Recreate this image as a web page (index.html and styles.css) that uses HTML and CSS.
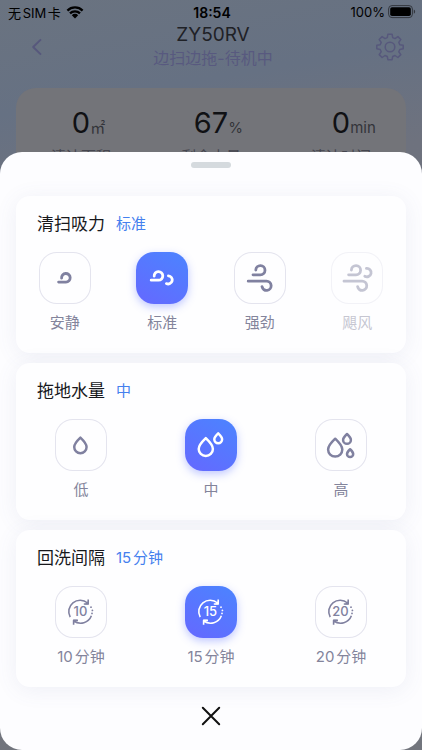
FILE: index.html
```
<!DOCTYPE html>
<html lang="zh-CN">
  <head>
    <meta charset="utf-8" />
    <meta name="viewport" content="width=device-width, initial-scale=1" />
    <title>ZY50RV</title>
    <link rel="stylesheet" href="styles.css">
  </head>
  <body>
    <svg class="defs" aria-hidden="true">
      <symbol id="cycle" viewBox="0 0 52 52">
        <path d="M15.2 31.2A11.4 11.4 0 0 1 32.6 17M36.4 29.8A11.6 11.6 0 0 1 18.8 35" />
        <path d="M33.2 13.6V18H28.8M18.6 38.8V34.4H23" />
        <path class="solid" d="M33.6 14.4V18.4H29.6zM18.4 37.6V33.8H22.2z" />
        <g class="solid">
          <circle cx="36" cy="21.2" r="0.9" />
          <circle cx="37.4" cy="24.4" r="0.9" />
          <circle cx="37" cy="27.4" r="0.9" />
        </g>
      </symbol>
      <symbol id="drop" viewBox="0 0 16 20" overflow="visible">
        <path d="M8 1.4C4.6 4.6 0.9 8.6 0.9 12.2a7.1 7.1 0 0 0 14.2 0C15.1 8.6 11.4 4.6 8 1.4z" vector-effect="non-scaling-stroke" />
      </symbol>
    </svg>

    <div id="device">
      <div id="status">
        <span class="carrier">无SIM卡
          <svg width="18" height="13" viewBox="0 0 18 13">
            <path d="M1.4 4.6a10.8 10.8 0 0 1 15.2 0M4 7.4a7 7 0 0 1 10 0" fill="none" stroke="#000" stroke-width="2.3" />
            <path d="M5.8 9.2a4.5 4.5 0 0 1 6.4 0L9 12.6z" />
          </svg>
        </span>
        <time>18:54</time>
        <span class="battery">100%
          <svg width="28" height="14" viewBox="0 0 28 14">
            <rect x="0.6" y="0.6" width="23.8" height="12" rx="3.4" fill="none" stroke="#33373e" />
            <rect x="2.2" y="2.2" width="20.6" height="8.8" rx="1.8" />
            <path d="M25.8 4.6c1.8.6 1.8 3.6 0 4.2z" fill="#33373e" />
          </svg>
        </span>
      </div>

      <header>
        <button type="button" aria-label="返回">
          <svg class="back" width="28" height="28" viewBox="0 0 28 28"><path d="M19 6.4L11.2 14l7.8 7.6" /></svg>
        </button>
        <div class="name">
          <h1>ZY50RV</h1>
          <p>边扫边拖-待机中</p>
        </div>
        <button type="button" aria-label="设置">
          <svg width="28" height="28" viewBox="0 0 28 28">
            <circle cx="14" cy="14" r="4.8" />
            <path d="M11.9 1.2h4.2l.6 3.4 2.3 1 2.9-2 2.9 2.9-2 2.9 1 2.3 3.4.6v3.4l-3.4.8-1 2.2 2 2.9-2.9 2.9-2.9-2-2.3 1-.6 3.2h-4.2l-.6-3.2-2.3-1-2.9 2-2.9-2.9 2-2.9-1-2.2-3.4-.8v-3.4l3.4-.6 1-2.3-2-2.9 2.9-2.9 2.9 2 2.3-1z" />
          </svg>
        </button>
      </header>

      <ul id="stats">
        <li><b>0</b><i>㎡</i><span>清洁面积</span></li>
        <li><b>67</b><i>%</i><span>剩余电量</span></li>
        <li><b>0</b><i>min</i><span>清洁时间</span></li>
      </ul>
    </div>

    <main id="sheet">
      <div class="handle"></div>

      <section>
        <h2>清扫吸力 <em>标准</em></h2>
        <div class="options">
          <button type="button" aria-pressed="false">
            <svg class="tile wind" viewBox="0 0 52 52"><path d="M22.6 26.2a4.3 4.3 0 1 1 4.3 3.9H19.6" /></svg>
            安静
          </button>
          <button type="button" aria-pressed="true">
            <svg class="tile wind" viewBox="0 0 52 52"><path d="M18.2 24.2a4.3 4.3 0 1 1 4.3 4H15.2M32.4 23.8a4.1 4.1 0 1 1-2 7.8" /></svg>
            标准
          </button>
          <button type="button" aria-pressed="false">
            <svg class="tile wind" viewBox="0 0 52 52"><path d="M21.8 18a4.6 4.6 0 1 1 4.6 4.8H19M14.2 29.2H32.4a4.6 4.6 0 1 1-4.4 5.4" /></svg>
            强劲
          </button>
          <button type="button" aria-pressed="false" disabled>
            <svg class="tile wind" viewBox="0 0 52 52"><path d="M20.4 18a4.6 4.6 0 1 1 4.6 4.8H17.6M13 29.2H31a4.6 4.6 0 1 1-4.4 5.4M35.4 16.4a4.2 4.2 0 1 1-1.6 7.8" /></svg>
            飓风
          </button>
        </div>
      </section>

      <section>
        <h2>拖地水量 <em>中</em></h2>
        <div class="options">
          <button type="button" aria-pressed="false">
            <svg class="tile" viewBox="0 0 52 52"><use href="#drop" x="18.4" y="17.4" width="14" height="17.4" /></svg>
            低
          </button>
          <button type="button" aria-pressed="true">
            <svg class="tile" viewBox="0 0 52 52">
              <use href="#drop" x="12.8" y="17.4" width="16" height="20.6" />
              <use href="#drop" x="28.8" y="13.4" width="8.8" height="11.4" />
            </svg>
            中
          </button>
          <button type="button" aria-pressed="false">
            <svg class="tile" viewBox="0 0 52 52">
              <use href="#drop" x="12.2" y="18" width="16" height="20.6" />
              <use href="#drop" x="27.6" y="14" width="8.8" height="11.4" />
              <use href="#drop" x="31.6" y="29.6" width="7" height="8.8" />
            </svg>
            高
          </button>
        </div>
      </section>

      <section>
        <h2>回洗间隔 <em>15分钟</em></h2>
        <div class="options">
          <button type="button" aria-pressed="false">
            <svg class="tile timer" viewBox="0 0 52 52"><use href="#cycle" width="52" height="52" /><text x="25.4" y="30.4">10</text></svg>
            10分钟
          </button>
          <button type="button" aria-pressed="true">
            <svg class="tile timer" viewBox="0 0 52 52"><use href="#cycle" width="52" height="52" /><text x="25.4" y="30.4">15</text></svg>
            15分钟
          </button>
          <button type="button" aria-pressed="false">
            <svg class="tile timer" viewBox="0 0 52 52"><use href="#cycle" width="52" height="52" /><text x="25.4" y="30.4">20</text></svg>
            20分钟
          </button>
        </div>
      </section>

      <button type="button" class="close" aria-label="关闭">
        <svg width="20" height="20" viewBox="0 0 20 20"><path d="M1.8 1.8l16.4 16.4M18.2 1.8L1.8 18.2" /></svg>
      </button>
    </main>
  </body>
</html>
```

FILE: styles.css
```
* { box-sizing: border-box; }

body {
    position: relative;
    margin: 0;
    min-height: 100vh;
    overflow: hidden;
    font-family: Inter, "Noto Sans CJK SC", sans-serif;
    text-autospace: normal;
    background: linear-gradient(170deg, #6a7380 0%, #667183 14%, #6e727e 26%, #72757d 100%);
}

h1, h2, p, ul { margin: 0; padding: 0; font-weight: 400; }

em, i { font-style: normal; }

button {
    padding: 0;
    border: 0;
    background: transparent;
    font: inherit;
    color: inherit;
    cursor: pointer;
}

svg { display: block; }

.defs { position: absolute; width: 0; height: 0; }

#status {
    display: grid;
    grid-template-columns: 1fr auto 1fr;
    align-items: center;
    height: 24px;
    padding: 0 6px 0 8px;
    font-size: 13px;
    color: #000;
}

  #status span { display: flex; align-items: center; gap: 5px; }
  #status .battery { justify-content: flex-end; gap: 3px; }
  #status time { font-size: 14px; font-weight: 600; }

header {
    display: flex;
    justify-content: space-between;
    padding: 0 18px 0 22px;
    text-align: center;
}

  header button { height: 46px; }

  header svg {
      fill: none;
      stroke: #57587c;
      stroke-width: 1.5;
      stroke-linejoin: round;
  }

  header .back { stroke-width: 2; }

  header h1 {
      font-size: 19px;
      line-height: 22px;
      color: #1f2126;
  }

  header p {
      font-size: 16px;
      line-height: 24px;
      color: #58597f;
  }

#stats {
    display: grid;
    grid-template-columns: repeat(3, 1fr);
    margin: 18px 16px 0;
    padding-top: 16px;
    height: 120px;
    list-style: none;
    border-radius: 20px;
    background: #737479;
}

  #stats li {
      display: grid;
      grid-template-columns: 1fr auto 1fr;
      align-items: baseline;
      align-content: start;
  }

  #stats b {
      grid-column: 2;
      font-size: 29px;
      font-weight: 400;
      line-height: 38px;
      color: #101114;
  }

  #stats i {
      font-size: 15px;
      line-height: 20px;
      color: #33343a;
  }

  #stats span {
      grid-column: 1 / 4;
      margin-top: 4px;
      text-align: center;
      font-size: 15px;
      line-height: 22px;
      color: #45464f;
  }

/* panel that slides up over the device page */
#sheet {
    position: absolute;
    left: 0; right: 0; bottom: 0;
    display: flex;
    flex-direction: column;
    gap: 10px;
    padding: 10px 16px 5px;
    border-radius: 22px;
    background: #fdfdff;
}

.handle {
    width: 40px; height: 6px;
    margin: 0 auto 18px;
    border-radius: 3px;
    background: #d5dade;
}

section {
    padding: 14px 0 19px;
    border-radius: 14px;
    background: #fefeff;
    box-shadow: 0 3px 22px rgba(90, 96, 150, 0.09);
}

  section h2 {
      display: flex;
      align-items: center;
      gap: 11px;
      height: 28px;
      padding-left: 21px;
      font-size: 17px;
      line-height: 28px;
      color: #17181c;
  }

  section h2 em {
      font-size: 15px;
      color: #4580ee;
  }

.options {
    display: grid;
    grid-auto-flow: column;
    grid-auto-columns: 1fr;
    margin-top: 14px;
}

  .options button {
      display: flex;
      flex-direction: column;
      align-items: center;
      gap: 8px;
      font-size: 15px;
      line-height: 22px;
      color: #83849b;
  }

  .options button:disabled { opacity: 0.45; cursor: default; }

.tile {
    width: 52px; height: 52px;
    border-radius: 18px;
    box-shadow: inset 0 0 0 1px #e4e4ee;
    fill: none;
    stroke: #8081a0;
    stroke-width: 2.5;
    stroke-linejoin: round;
    color: #8081a0;
}

  .wind { stroke-width: 2.8; stroke-linecap: round; }

  .timer { stroke-width: 1.6; }

  .timer text {
      font-size: 13px;
      font-weight: 500;
      text-anchor: middle;
      fill: currentColor;
      stroke: none;
  }

  .solid { fill: currentColor; stroke: none; }

  [aria-pressed=true] .tile {
      color: #fff;
      stroke: #fff;
      background: linear-gradient(30deg, #6568ff, #4b84ff);
      box-shadow: 0 3px 9px rgba(90, 110, 255, 0.38);
  }

.close {
    display: flex;
    align-items: center;
    justify-content: center;
    height: 58px;
    width: 58px;
    margin: -10px auto 0;
}

  .close svg { stroke: #111; stroke-width: 2; stroke-linecap: round; }
```
